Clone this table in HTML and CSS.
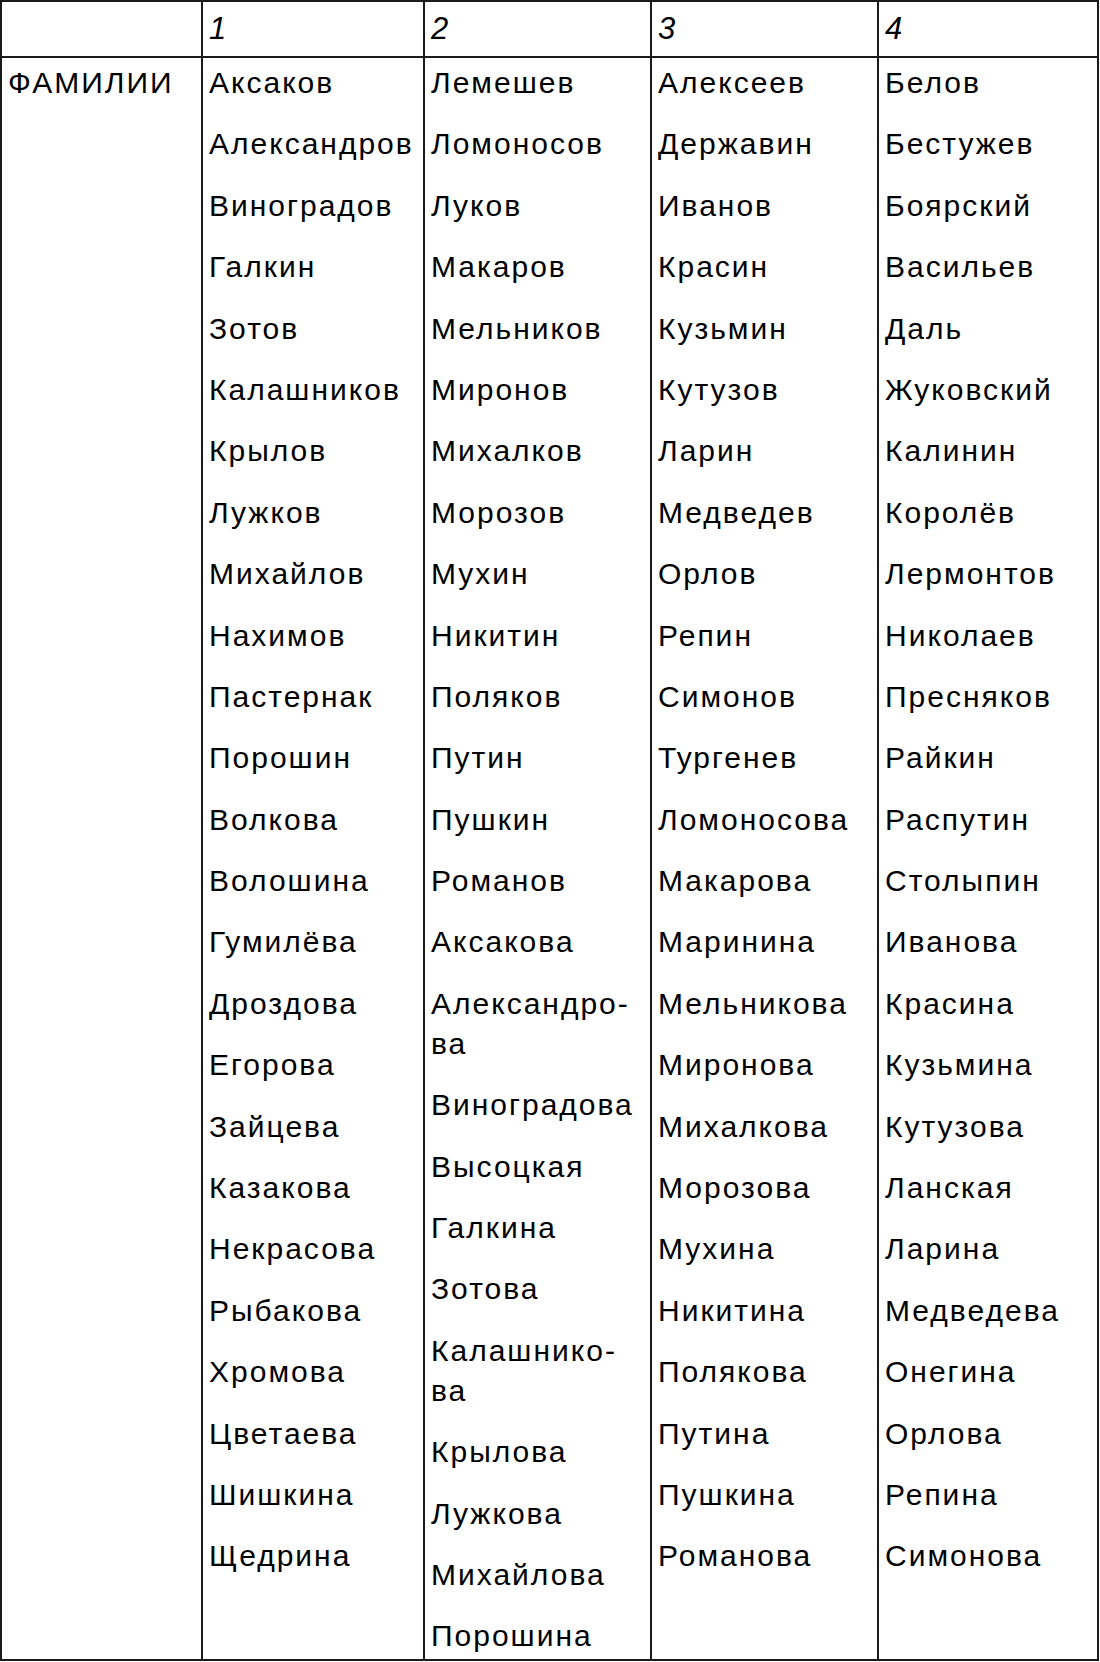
FILE: index.html
```html
<!DOCTYPE html>
<html lang="ru">
<head>
<meta charset="utf-8">
<title>Фамилии</title>
<link rel="stylesheet" href="styles.css">
</head>
<body>
<table class="grid">
  <colgroup>
    <col class="c-label">
    <col class="c-1">
    <col class="c-2">
    <col class="c-3">
    <col class="c-4">
  </colgroup>
  <thead>
    <tr>
      <th class="head"></th>
      <th class="head num">1</th>
      <th class="head num">2</th>
      <th class="head num">3</th>
      <th class="head num">4</th>
    </tr>
  </thead>
  <tbody>
    <tr>
      <td class="cell label">ФАМИЛИИ</td>
      <td class="cell">
        <ul class="names">
          <li>Аксаков</li><li>Александров</li><li>Виноградов</li><li>Галкин</li><li>Зотов</li><li>Калашников</li><li>Крылов</li><li>Лужков</li><li>Михайлов</li><li>Нахимов</li><li>Пастернак</li><li>Порошин</li><li>Волкова</li><li>Волошина</li><li>Гумилёва</li><li>Дроздова</li><li>Егорова</li><li>Зайцева</li><li>Казакова</li><li>Некрасова</li><li>Рыбакова</li><li>Хромова</li><li>Цветаева</li><li>Шишкина</li><li>Щедрина</li>
        </ul>
      </td>
      <td class="cell">
        <ul class="names">
          <li>Лемешев</li><li>Ломоносов</li><li>Луков</li><li>Макаров</li><li>Мельников</li><li>Миронов</li><li>Михалков</li><li>Морозов</li><li>Мухин</li><li>Никитин</li><li>Поляков</li><li>Путин</li><li>Пушкин</li><li>Романов</li><li>Аксакова</li><li>Александро-<br>ва</li><li>Виноградова</li><li>Высоцкая</li><li>Галкина</li><li>Зотова</li><li>Калашнико-<br>ва</li><li>Крылова</li><li>Лужкова</li><li>Михайлова</li><li>Порошина</li>
        </ul>
      </td>
      <td class="cell">
        <ul class="names">
          <li>Алексеев</li><li>Державин</li><li>Иванов</li><li>Красин</li><li>Кузьмин</li><li>Кутузов</li><li>Ларин</li><li>Медведев</li><li>Орлов</li><li>Репин</li><li>Симонов</li><li>Тургенев</li><li>Ломоносова</li><li>Макарова</li><li>Маринина</li><li>Мельникова</li><li>Миронова</li><li>Михалкова</li><li>Морозова</li><li>Мухина</li><li>Никитина</li><li>Полякова</li><li>Путина</li><li>Пушкина</li><li>Романова</li>
        </ul>
      </td>
      <td class="cell">
        <ul class="names">
          <li>Белов</li><li>Бестужев</li><li>Боярский</li><li>Васильев</li><li>Даль</li><li>Жуковский</li><li>Калинин</li><li>Королёв</li><li>Лермонтов</li><li>Николаев</li><li>Пресняков</li><li>Райкин</li><li>Распутин</li><li>Столыпин</li><li>Иванова</li><li>Красина</li><li>Кузьмина</li><li>Кутузова</li><li>Ланская</li><li>Ларина</li><li>Медведева</li><li>Онегина</li><li>Орлова</li><li>Репина</li><li>Симонова</li>
        </ul>
      </td>
    </tr>
  </tbody>
</table>
</body>
</html>
```

FILE: styles.css
```css
html, body {
  margin: 0;
  padding: 0;
  background: #ffffff;
}

body {
  font-family: "Liberation Sans", Arial, sans-serif;
  font-size: 30px;
  line-height: 40px;
  color: #000000;
  letter-spacing: 2px;
}

.grid {
  border-collapse: separate;
  border-spacing: 0;
  table-layout: fixed;
  width: 1099px;
  border-top: 2px solid #1a1a1a;
  border-left: 2px solid #1a1a1a;
}

.c-label { width: 201px; }
.c-1 { width: 222px; }
.c-2 { width: 227px; }
.c-3 { width: 227px; }
.c-4 { width: 220px; }

.head,
.cell {
  box-sizing: border-box;
  border-right: 2px solid #1a1a1a;
  border-bottom: 2px solid #1a1a1a;
  text-align: left;
  vertical-align: top;
  padding: 5px 2px 3px 6px;
  font-weight: normal;
}

.head {
  height: 56px;
  padding-top: 7px;
  padding-bottom: 7px;
}

.num {
  font-style: italic;
  font-size: 31px;
}

.names {
  list-style: none;
  margin: 0;
  padding: 0;
}

.names li {
  margin: 0 0 21.4px 0;
  white-space: nowrap;
}

.names li:last-child {
  margin-bottom: 0;
}
```
